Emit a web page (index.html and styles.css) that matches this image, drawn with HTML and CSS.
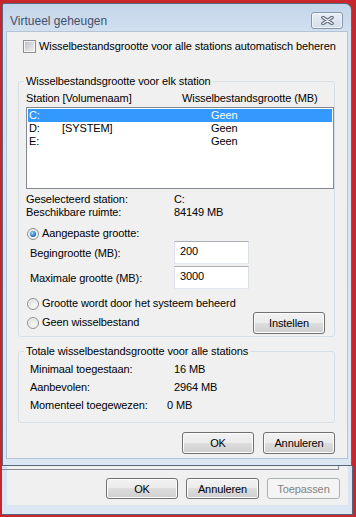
FILE: index.html
```html
<!DOCTYPE html>
<html lang="nl">
	<head>
		<meta charset="UTF-8">
		<meta name="viewport" content="width=device-width, initial-scale=1.0">
		<title>Virtueel geheugen</title>
		<link rel="stylesheet" href="styles.css">
	</head>
	<body>
		<div class="desk">
			<div class="dialog">
				<div class="titlebar">
					<span class="title">Virtueel geheugen</span>
					<span class="close">
						<svg width="13" height="9" viewBox="0 0 13 9">
							<path d="M2 1.5L11 7.5M11 1.5L2 7.5" stroke="#5f6b7b" stroke-width="3.6" stroke-linecap="round"/>
							<path d="M2 1.5L11 7.5M11 1.5L2 7.5" stroke="#eef2f7" stroke-width="1.5" stroke-linecap="round"/>
						</svg>
					</span>
				</div>
				<div class="client">
					<div class="auto-row">
						<span class="check"></span>
						<span class="check-label">Wisselbestandsgrootte voor alle stations automatisch beheren</span>
					</div>

					<fieldset class="group">
						<legend>Wisselbestandsgrootte voor elk station</legend>
						<div class="cols">
							<span>Station [Volumenaam]</span>
							<span>Wisselbestandsgrootte (MB)</span>
						</div>
						<div class="listbox">
							<div class="row sel"><span>C:</span><span></span><span>Geen</span></div>
							<div class="row"><span>D:</span><span>[SYSTEM]</span><span>Geen</span></div>
							<div class="row"><span>E:</span><span></span><span>Geen</span></div>
						</div>
						<div class="info">
							<span>Geselecteerd station:</span><span>C:</span>
							<span>Beschikbare ruimte:</span><span>84149 MB</span>
						</div>
						<div class="radio-row first">
							<span class="radio on"></span>
							<span class="radio-label">Aangepaste grootte:</span>
						</div>
						<div class="size-row">
							<span class="size-label">Begingrootte (MB):</span>
							<div class="textbox">200</div>
						</div>
						<div class="size-row second">
							<span class="size-label">Maximale grootte (MB):</span>
							<div class="textbox">3000</div>
						</div>
						<div class="radio-row first">
							<span class="radio"></span>
							<span class="radio-label">Grootte wordt door het systeem beheerd</span>
						</div>
						<div class="radio-row last">
							<span class="radio"></span>
							<span class="radio-label">Geen wisselbestand</span>
							<button class="btn set-btn" type="button">Instellen</button>
						</div>
					</fieldset>

					<fieldset class="group totals">
						<legend>Totale wisselbestandsgrootte voor alle stations</legend>
						<div class="total-row"><span>Minimaal toegestaan:</span><span>16 MB</span></div>
						<div class="total-row"><span>Aanbevolen:</span><span>2964 MB</span></div>
						<div class="total-row"><span>Momenteel toegewezen:</span><span class="shift">0 MB</span></div>
					</fieldset>

					<div class="dlg-buttons">
						<button class="btn" type="button">OK</button>
						<button class="btn" type="button">Annuleren</button>
					</div>
				</div>
			</div>

			<div class="parent">
				<div class="parent-client">
					<div class="tab-edge"></div>
					<div class="parent-buttons">
						<button class="btn small" type="button">OK</button>
						<button class="btn small wide" type="button">Annuleren</button>
						<button class="btn small wide off" type="button">Toepassen</button>
					</div>
				</div>
			</div>
		</div>
	</body>
</html>
```

FILE: styles.css
```css
*{
	box-sizing: border-box;
}
body{
	margin: 0;
	width: 356px;
	height: 517px;
	overflow: hidden;
	background-color: #c8262c;
	font-family: "Liberation Sans", Arial, sans-serif;
	font-size: 11px;
	letter-spacing: -0.1px;
	color: #000;
}
.desk{
	padding: 3px 0 0 2px;
}
.dialog{
	width: 350px;
	height: 463px;
	border: 1px solid #56677c;
	border-radius: 2px 7px 0 0;
	background: linear-gradient(#c3d5ea, #d4e1f0 30px, #dce7f3);
	padding: 0 4px 7px;
}
.titlebar{
	height: 28px;
	display: flex;
	justify-content: space-between;
	align-items: flex-start;
	padding: 0 4px 0 3px;
}
.title{
	margin-top: 10px;
	font-size: 12px;
	line-height: 14px;
	letter-spacing: 0;
	color: #44506a;
}
.close{
	margin-top: 8px;
	width: 32px;
	height: 17px;
	border: 1px solid #8797ab;
	border-radius: 3px;
	background: linear-gradient(#e9eff7, #d2deec);
	box-shadow: inset 0 0 0 1px rgba(255,255,255,0.6);
	display: flex;
	align-items: center;
	justify-content: center;
}
.client{
	height: 426px;
	background-color: #f0f0f0;
	padding-top: 8px;
	box-shadow: 0 0 0 1px #b3c4d9;
}
.auto-row{
	height: 13px;
	display: flex;
	align-items: center;
	padding-left: 16px;
}
.check{
	width: 13px;
	height: 13px;
	border: 1px solid #8e8f8f;
	background: linear-gradient(135deg, #b9bcc0, #f5f5f5);
	box-shadow: inset 0 0 0 1px #f4f4f4;
}
.check-label{
	margin-left: 3px;
	line-height: 13px;
}
.group{
	margin: 22px 12px 0 11px;
	padding: 4px 0 3px 7px;
	border: 1px solid #d5dfe5;
	border-radius: 3px;
	min-width: 0;
}
.group legend{
	padding: 0 2px;
	margin-left: -2px;
	line-height: 13px;
}
.cols{
	display: grid;
	grid-template-columns: 156px 1fr;
	line-height: 13px;
}
.listbox{
	margin-top: 2px;
	height: 82px;
	border: 1px solid #828790;
	padding: 1px;
	background-color: #fff;
}
.row{
	display: grid;
	grid-template-columns: 33px 149px 1fr;
	height: 13px;
	line-height: 13px;
	padding-left: 1px;
}
.row.sel{
	background-color: #3399ff;
	color: #fff;
}
.info{
	margin-top: 4px;
	display: grid;
	grid-template-columns: 148px 1fr;
	line-height: 13px;
}
.radio-row{
	height: 13px;
	display: flex;
	align-items: center;
	padding-left: 1px;
}
.radio-row.first{
	margin-top: 8px;
}
.radio-row.last{
	margin-top: 2px;
	height: 21px;
	padding-right: 9px;
}
.radio{
	width: 12px;
	height: 12px;
	border: 1px solid #8e8f8f;
	border-radius: 50%;
	background: radial-gradient(circle at 60% 65%, #fbfbfb, #d2d4d6);
	box-shadow: inset 0 0 0 1px #f6f6f6;
	display: flex;
	align-items: center;
	justify-content: center;
}
.radio.on::after{
	content: '';
	width: 6px;
	height: 6px;
	border-radius: 50%;
	background: radial-gradient(circle at 40% 35%, #a8e4ff, #2a78c8 55%, #123f7c);
}
.radio-label{
	margin-left: 3px;
	line-height: 13px;
}
.set-btn{
	margin-left: auto;
	width: 73px;
	height: 21px;
}
.size-row{
	margin-top: 1px;
	height: 23px;
	display: flex;
	align-items: center;
	padding-left: 4px;
}
.size-row.second{
	margin-top: 2px;
}
.size-label{
	width: 144px;
}
.textbox{
	width: 75px;
	height: 23px;
	border: 1px solid;
	border-color: #abadb3 #dbdfe6 #e3e9ef #e2e3ea;
	background-color: #fff;
	padding: 3px 0 0 5px;
	line-height: 13px;
}
.totals{
	margin-top: 8px;
	padding: 2px 0 8px 7px;
}
.total-row{
	display: grid;
	grid-template-columns: 144px 1fr;
	padding-left: 4px;
	line-height: 18px;
}
.shift{
	margin-left: -7px;
}
.dlg-buttons{
	margin-top: 9px;
	display: flex;
	justify-content: flex-end;
	gap: 9px;
	padding-right: 12px;
}
.btn{
	appearance: none;
	width: 72px;
	height: 22px;
	padding: 0;
	font: inherit;
	letter-spacing: inherit;
	color: #000;
	border: 1px solid #707070;
	border-radius: 3px;
	background: linear-gradient(#f2f2f2, #ebebeb 50%, #dddddd 50%, #cfcfcf);
	box-shadow: inset 0 0 0 1px #fcfcfc;
}
.btn.small{
	height: 21px;
}
.btn.wide{
	width: 73px;
}
.btn.off{
	border-color: #adb2b5;
	background: #f4f4f4;
	color: #838383;
	box-shadow: none;
}
.parent{
	width: 351px;
	height: 49px;
	border-right: 1px solid #56677c;
	border-bottom: 1px solid #56677c;
	background: linear-gradient(#d7e3f1, #dce7f3);
	padding: 0 4px 9px 5px;
}
.parent-client{
	height: 39px;
	background-color: #f0f0f0;
}
.tab-edge{
	width: 337px;
	height: 4px;
	margin-left: -5px;
	border-right: 1px solid #898c95;
	border-bottom: 1px solid #898c95;
}
.parent-buttons{
	margin-top: 8px;
	display: flex;
	justify-content: flex-end;
	gap: 8px;
	padding-right: 8px;
}
```
